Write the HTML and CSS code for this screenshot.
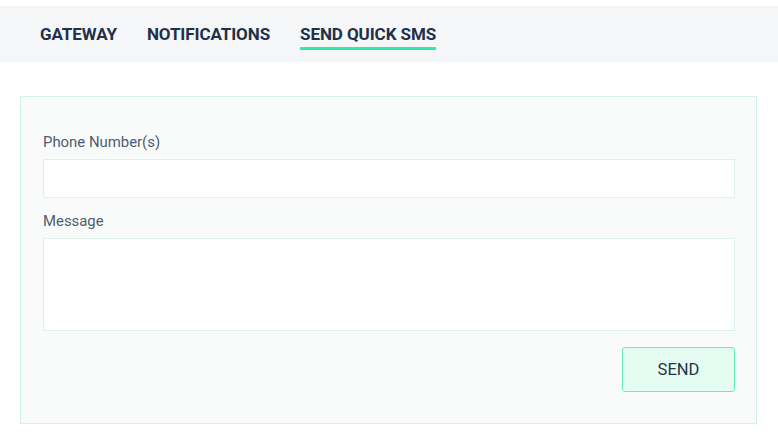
FILE: index.html
```html
<!DOCTYPE html>
<html>
<head>
<meta charset="utf-8">
<link rel="stylesheet" href="styles.css">
</head>
<body>
<nav class="tabs">
  <a class="tab">GATEWAY</a>
  <a class="tab">NOTIFICATIONS</a>
  <a class="tab active">SEND QUICK SMS</a>
</nav>
<main class="content">
  <form class="card">
    <label class="label">Phone Number(s)</label>
    <input class="field" type="text">
    <label class="label label-msg">Message</label>
    <textarea class="field area"></textarea>
    <div class="actions">
      <button class="send" type="button">SEND</button>
    </div>
  </form>
</main>
</body>
</html>
```
FILE: styles.css
```css
* { box-sizing: border-box; }
html, body { margin: 0; background: #fff; }
body { font-family: Roboto, "Liberation Sans", sans-serif; color: #243447; }
.tabs {
  margin-top: 6px;
  height: 56px;
  background: #f5f6f8;
  display: flex;
  gap: 30px;
  padding-left: 40px;
}
.tab {
  font-size: 17px;
  letter-spacing: -0.08px;
  font-weight: 700;
  color: #1f3048;
  height: 56px;
  line-height: 56px;
  position: relative;
}
.tab.active::after {
  content: "";
  position: absolute;
  left: 0; right: 0;
  top: 41px;
  height: 3px;
  background: #2eeaa8;
  border-radius: 1px;
}
.content { padding: 34px 21px 0 20px; }
.card {
  background: #f9fbfb;
  border: 1px solid #d4f4e9;
  padding: 35px 21px 31px 22px;
  display: flex;
  flex-direction: column;
}
.label {
  font-size: 14.9px;
  line-height: 20px;
  color: #4f5b6e;
  margin-bottom: 7px;
}
.label-msg { margin-top: 13px; margin-bottom: 7px; }
.field {
  display: block;
  width: 100%;
  height: 39px;
  border: 1px solid #dcf3ec;
  background: #fff;
  margin: 0;
  font: inherit;
  padding: 8px;
  outline: none;
}
.area { height: 93px; resize: none; }
.actions { display: flex; justify-content: flex-end; margin-top: 16px; }
.send {
  width: 113px;
  height: 45px;
  background: #e5fcf3;
  border: 1px solid #66efbd;
  border-radius: 3px;
  font-family: Roboto, "Liberation Sans", sans-serif;
  font-size: 16.5px;
  color: #243447;
  padding: 0;
  margin: 0;
}
```
